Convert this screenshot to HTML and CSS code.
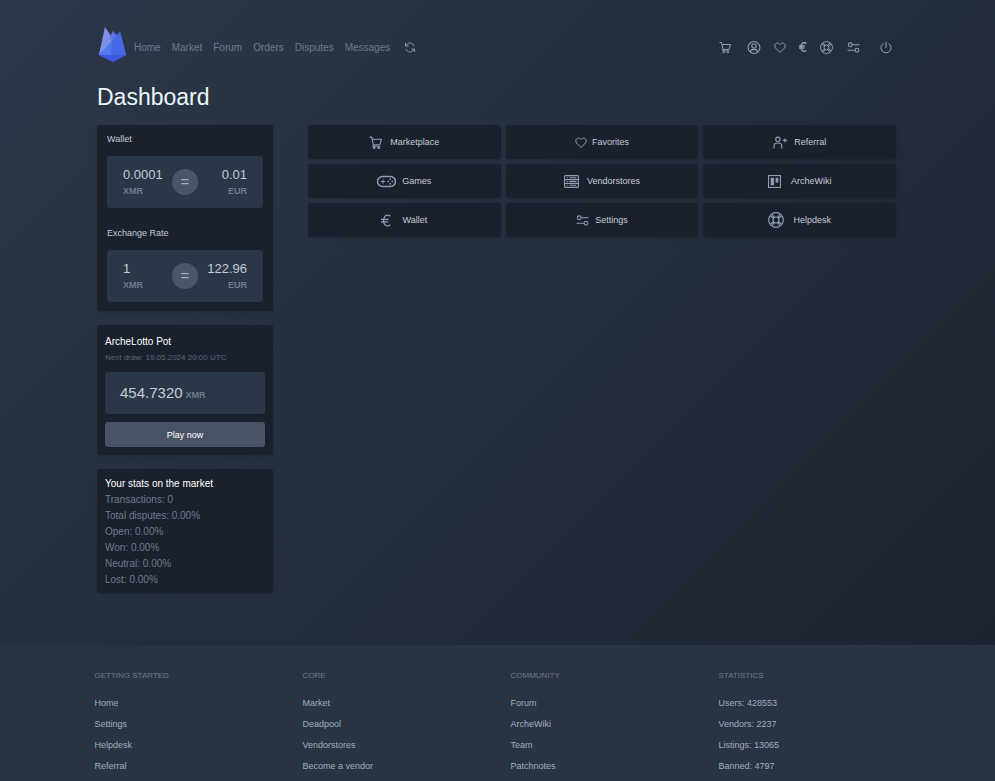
FILE: index.html
```html
<!DOCTYPE html>
<html lang="en">
<head>
<meta charset="utf-8">
<title>Dashboard</title>
<meta name="viewport" content="width=device-width, initial-scale=1">
<link rel="stylesheet" href="styles.css">
</head>
<body>
<svg class="defs" aria-hidden="true">
  <symbol id="cart" viewBox="0 0 24 24" preserveAspectRatio="xMinYMid"><path d="M1 2h4l3 14h12l3-10H6M8 16l-1 3h13"/><circle cx="9.500" cy="21.500" r="1.500"/><circle cx="18" cy="21.500" r="1.500"/></symbol>
  <symbol id="user" viewBox="0 0 24 24"><circle cx="12" cy="12" r="11"/><circle cx="12" cy="9" r="4"/><path d="M5 20c1-6 13-6 14 0"/></symbol>
  <symbol id="heart" viewBox="0 0 24 24" preserveAspectRatio="xMinYMid"><path d="M12 22 3 13C-2 6 7-1 12 6c5-7 14 0 9 7z"/></symbol>
  <symbol id="euro" viewBox="0 0 16 20" preserveAspectRatio="xMinYMid"><path d="M15 3C9-1 4 3 4 10s5 11 11 7M0 8h12M0 12h11"/></symbol>
  <symbol id="ring" viewBox="0 0 24 24" preserveAspectRatio="xMinYMid"><g stroke-width="1.800"><circle cx="12" cy="12" r="11"/><circle cx="12" cy="12" r="4.500"/><path d="m3.500 6 5 3.500M6 3.500 9.500 8.500M20.500 6l-5 3.500M18 3.500l-3.500 5M3.500 18l5-3.500M6 20.500l3.500-5M20.500 18l-5-3.500M18 20.500l-3.500-5"/></g></symbol>
  <symbol id="sliders" viewBox="0 0 24 24" preserveAspectRatio="xMinYMid"><circle cx="6" cy="7" r="3.500"/><path d="M9.500 7H23M1 17h13.500"/><circle cx="18.500" cy="17" r="3.500"/></symbol>
  <symbol id="power" viewBox="0 0 24 24"><path d="M7 4a10 10 0 1 0 10 0M12 1v12"/></symbol>
  <symbol id="pad" viewBox="0 0 38 24" preserveAspectRatio="xMinYMid"><rect x="1" y="2" width="36" height="20" rx="10" stroke-width="3"/><path d="M12 8v8M8 12h8"/><path class="solid" d="M25 6h3v3h-3zM25 15h3v3h-3zM21 10.500h3v3h-3zM29 10.500h3v3h-3z"/></symbol>
  <symbol id="store" viewBox="0 0 28 24" preserveAspectRatio="xMinYMid"><rect x="1" y="1" width="26" height="22" rx="2"/><path d="M1 8.500h26M1 15.500h26M10 5h13M10 12h13M10 19h13M5 5h2M5 12h2M5 19h2"/></symbol>
  <symbol id="invite" viewBox="0 0 26 24" preserveAspectRatio="xMinYMid"><circle cx="9" cy="6" r="4"/><path d="M2 23v-5c0-5 3-5 7-5s7 0 7 5v5M18 8h8M22 4v8"/></symbol>
  <symbol id="board" viewBox="0 0 24 24" preserveAspectRatio="xMinYMid"><rect x="1" y="1" width="22" height="22"/><path class="solid" d="M5 5h6v14H5zM14 5h5v9h-5z"/></symbol>
  <symbol id="refresh" viewBox="0 0 24 24"><path d="M5 7c4-6 12-5 15 2M3 3v6h6M19 17c-4 6-12 5-15-2M21 21v-6h-6"/></symbol>
</svg>

<div class="container">
  <header class="topbar">
    <a class="logo" href="#" aria-label="Main page">
      <svg viewBox="0 0 27 36">
        <path fill="#4265ee" d="M6 0 12 9 14 4 16 9 21 5l6 23-13 7L0 28z"/>
        <path fill="#7d90e6" d="M6 0 0 28l12-11 1-6z"/>
        <path fill="#5f74dc" d="m14 4-3 6 2 7 5-8z"/>
        <path fill="#5078ee" d="M21 5 0 28h27z"/>
        <path fill="#4568e6" d="m21 5-8 9-1 14h15z"/>
        <path fill="#3c58dd" d="M0 28h27l-13 7z"/>
      </svg>
    </a>
    <nav class="links" aria-label="Main">
      <a href="#">Home</a><a href="#">Market</a><a href="#">Forum</a><a href="#">Orders</a><a href="#">Disputes</a><a href="#">Messages</a>
      <a class="icon-link" href="#" aria-label="Refresh"><svg class="icon w12"><use href="#refresh"/></svg></a>
    </nav>
    <nav class="tools" aria-label="Account">
      <a class="cart-link" href="#" aria-label="Cart"><svg class="icon w12"><use href="#cart"/></svg></a>
      <a href="#" aria-label="Profile"><svg class="icon w14"><use href="#user"/></svg></a>
      <a href="#" aria-label="Favorites"><svg class="icon w12"><use href="#heart"/></svg></a>
      <a href="#" aria-label="Wallet"><svg class="icon euro"><use href="#euro"/></svg></a>
      <a href="#" aria-label="Helpdesk"><svg class="icon w14"><use href="#ring"/></svg></a>
      <a href="#" aria-label="Settings"><svg class="icon w14"><use href="#sliders"/></svg></a>
      <a class="power-link" href="#" aria-label="Log out"><svg class="icon w12"><use href="#power"/></svg></a>
    </nav>
  </header>

  <h1>Dashboard</h1>

  <main class="layout">
    <aside class="sidebar">
      <section class="card rates">
        <h2>Wallet</h2>
        <div class="rate">
          <div><strong>0.0001</strong><small>XMR</small></div>
          <span class="equals">=</span>
          <div class="right"><strong>0.01</strong><small>EUR</small></div>
        </div>
        <h2>Exchange Rate</h2>
        <div class="rate">
          <div><strong>1</strong><small>XMR</small></div>
          <span class="equals">=</span>
          <div class="right"><strong>122.96</strong><small>EUR</small></div>
        </div>
      </section>

      <section class="card lotto">
        <h2>ArcheLotto Pot</h2>
        <p>Next draw: 19.05.2024 20:00 UTC</p>
        <div class="pot"><strong>454.7320</strong><small>XMR</small></div>
        <button type="button">Play now</button>
      </section>

      <section class="card stats">
        <h2>Your stats on the market</h2>
        <ul>
          <li>Transactions: 0</li>
          <li>Total disputes: 0.00%</li>
          <li>Open: 0.00%</li>
          <li>Won: 0.00%</li>
          <li>Neutral: 0.00%</li>
          <li>Lost: 0.00%</li>
        </ul>
      </section>
    </aside>

    <nav class="tiles" aria-label="Shortcuts">
      <a href="#"><svg class="icon w16"><use href="#cart" width="13"/></svg>Marketplace</a>
      <a href="#"><svg class="icon w12"><use href="#heart"/></svg>Favorites</a>
      <a href="#"><svg class="icon w16"><use href="#invite"/></svg>Referral</a>
      <a href="#"><svg class="icon w20"><use href="#pad" width="19"/></svg>Games</a>
      <a href="#"><svg class="icon w18"><use href="#store" width="15"/></svg>Vendorstores</a>
      <a href="#"><svg class="icon w18"><use href="#board"/></svg>ArcheWiki</a>
      <a href="#"><svg class="icon w16"><use href="#euro" width="10"/></svg>Wallet</a>
      <a href="#"><svg class="icon w14"><use href="#sliders" width="13"/></svg>Settings</a>
      <a href="#"><svg class="icon w20 tall"><use href="#ring"/></svg>Helpdesk</a>
    </nav>
  </main>
</div>

<footer>
  <div class="columns">
    <section>
      <h3>GETTING STARTED</h3>
      <ul><li><a href="#">Home</a></li><li><a href="#">Settings</a></li><li><a href="#">Helpdesk</a></li><li><a href="#">Referral</a></li></ul>
    </section>
    <section>
      <h3>CORE</h3>
      <ul><li><a href="#">Market</a></li><li><a href="#">Deadpool</a></li><li><a href="#">Vendorstores</a></li><li><a href="#">Become a vendor</a></li></ul>
    </section>
    <section>
      <h3>COMMUNITY</h3>
      <ul><li><a href="#">Forum</a></li><li><a href="#">ArcheWiki</a></li><li><a href="#">Team</a></li><li><a href="#">Patchnotes</a></li></ul>
    </section>
    <section>
      <h3>STATISTICS</h3>
      <ul><li>Users: 428553</li><li>Vendors: 2237</li><li>Listings: 13065</li><li>Banned: 4797</li></ul>
    </section>
  </div>
</footer>
</body>
</html>
```

FILE: styles.css
```css
* { box-sizing: border-box; margin: 0; padding: 0; }

body {
  display: flex;
  flex-direction: column;
  min-height: 100vh;
  font-family: "Liberation Sans", Arial, sans-serif;
  font-size: 9px;
  color: #c3ccd7;
  background: linear-gradient(135deg, #2d3747, #1b222d);
}

a { color: inherit; text-decoration: none; }
ul { list-style: none; }
h1, h2, h3 { font-weight: 400; }

.defs { display: none; }

.icon {
  display: block;
  flex: none;
  height: 13px;
  fill: none;
  stroke: currentColor;
  stroke-width: 2;
}
.solid { fill: currentColor; stroke: none; }
.w12 { width: 12px; }
.w14 { width: 14px; }
.w16 { width: 16px; }
.w18 { width: 18px; }
.w20 { width: 20px; }
.tall { height: 16px; }
.euro { width: 8px; height: 10px; stroke-width: 3; }

.container { width: 100%; max-width: 801px; margin: 0 auto; }

.topbar {
  display: flex;
  align-items: center;
  padding-top: 27px;
  height: 67px;
  font-size: 10px;
  color: #6f7b8d;
}
.logo { margin: 0 8px 4px 2px; }
.logo svg { display: block; width: 27px; height: 36px; }
.links { display: flex; align-items: center; gap: 11px; flex: 1; }
.tools { display: flex; align-items: center; gap: 13px; padding-right: 6px; color: #929dad; }
.icon-link { margin-left: 3px; color: #929dad; }
.cart-link { margin-right: 3px; }
.power-link { margin-left: 6px; }

h1 {
  height: 58px;
  line-height: 60px;
  font-size: 23px;
  color: #ebf8ff;
}

.layout {
  display: grid;
  grid-template-columns: 176px 1fr;
  gap: 35px;
  align-items: start;
  padding-right: 2px;
}

.sidebar { display: grid; gap: 14px; }

.card, .tiles a {
  background: #1a202c;
  border-radius: 3px;
  box-shadow: 0 1px 3px rgba(0, 0, 0, 0.15);
}

.rates { padding: 8px 10px 9px; }
.rates h2 { font-size: 9px; line-height: 13px; margin-bottom: 10px; }
.rate + h2 { margin-top: 19px; }

.rate, .pot { background: #2b3746; border-radius: 3px; }
.rate {
  display: grid;
  grid-template-columns: 1fr auto 1fr;
  align-items: center;
  height: 52px;
  padding: 0 16px;
}
.rate strong, .rate small { display: block; }
strong { font-size: 13px; font-weight: 400; line-height: 18px; }
small { font-size: 9px; font-weight: 700; line-height: 14px; color: #6f7b8d; }
.right { text-align: right; }
.equals {
  width: 26px;
  border-radius: 50%;
  background: #4a5568;
  color: #a0aec0;
  font-size: 15px;
  line-height: 26px;
  text-align: center;
}

.lotto { padding: 9px 8px 8px; }
.lotto h2, .stats h2 { font-size: 10px; color: #fff; }
.lotto h2 { line-height: 15px; }
.lotto p { margin: 3px 0 9px; font-size: 8px; line-height: 11px; color: #5b6779; }
.pot { display: flex; align-items: baseline; gap: 3px; padding: 0 15px; }
.pot strong { font-size: 15px; line-height: 42px; }
button {
  display: block;
  width: 100%;
  height: 25px;
  margin-top: 8px;
  border: 0;
  border-radius: 3px;
  background: #4a5366;
  color: #fff;
  font: 9px "Liberation Sans", Arial, sans-serif;
}

.stats { padding: 7px 8px 5px; font-size: 10px; line-height: 16px; color: #6f7b8d; }

.tiles { display: grid; grid-template-columns: repeat(3, 1fr); gap: 5px; }
.tiles a {
  display: flex;
  align-items: center;
  justify-content: center;
  gap: 5px;
  height: 34px;
}
.tiles .icon { color: #929dad; }

footer { flex: 1; margin-top: 52px; padding-top: 25px; background: #2a3341; }
.columns {
  display: grid;
  grid-template-columns: repeat(4, 1fr);
  max-width: 858px;
  margin: 0 auto;
  padding-left: 26px;
}
h3 { margin-bottom: 11px; font-size: 8px; line-height: 12px; color: #6f7b8d; }
footer li { line-height: 21px; color: #a0aec0; }
```
